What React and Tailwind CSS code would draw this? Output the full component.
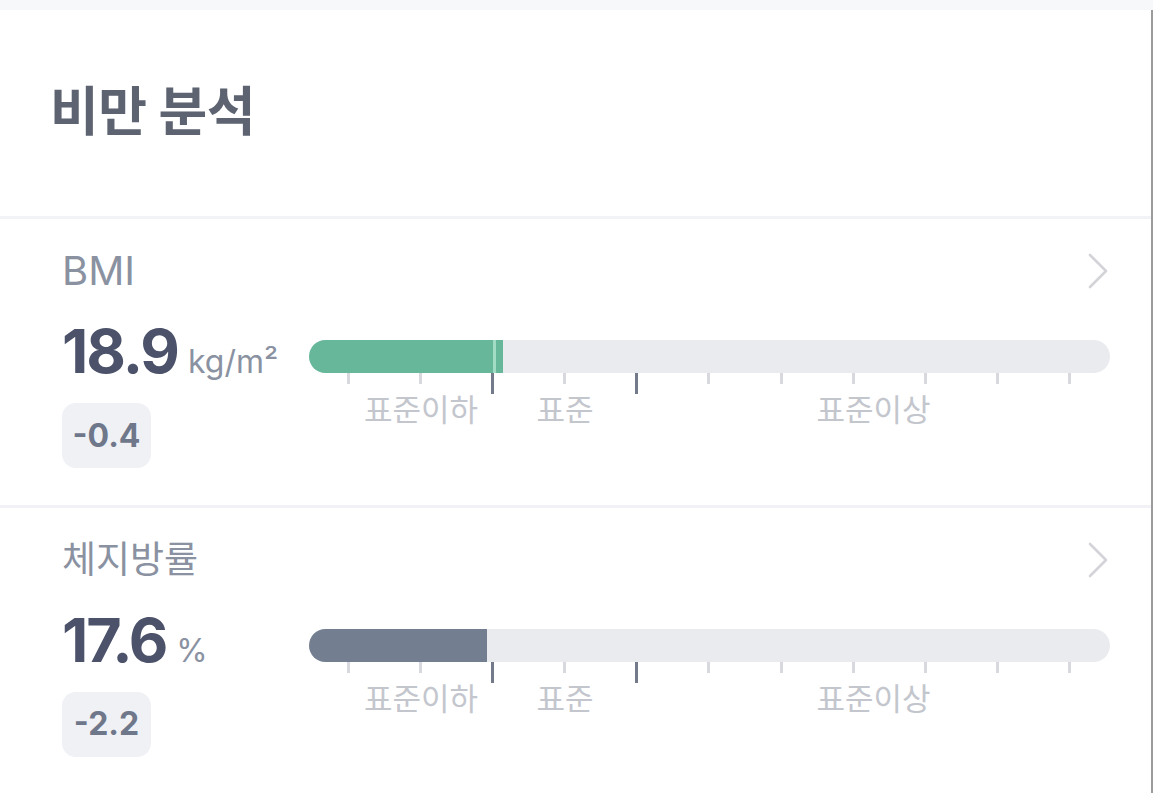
const sections = [
  { label: "BMI", labelSize: "text-[40px]", value: "18.9", unit: "kg/m²", diff: "-0.4", fill: 194, color: "bg-[#67b89b]", marker: true },
  { label: "체지방률", labelSize: "text-[37px]", value: "17.6", unit: "%", diff: "-2.2", fill: 178, color: "bg-[#737e90]", marker: false },
];

const ticks = [false, false, true, false, true, false, false, false, false, false, false];

const Chevron = () => (
  <svg width="22" height="36" viewBox="0 0 22 36" fill="none" className="mr-[1px]">
    <path d="M3 2 L19 18 L3 34" stroke="#d3d4d8" strokeWidth="2.6" strokeLinecap="round" strokeLinejoin="round" />
  </svg>
);

const Gauge = ({ fill, color, marker }) => (
  <div className="flex-1 pt-[20px]">
    <div className="relative h-[33px] rounded-full bg-[#eaebef] overflow-hidden">
      <div className={`relative h-full ${color}`} style={{ width: fill }}>
        {marker && <div className="absolute top-0 bottom-0 right-[7px] w-[3px] bg-[#a3dcc4]" />}
      </div>
    </div>
    <div className="flex justify-between items-start pl-[38px] pr-[39px] h-[21px]">
      {ticks.map((major, i) => (
        <div
          key={i}
          className={major ? "w-[3px] h-[21px] bg-[#737a89]" : "w-[3px] h-[11px] bg-[#d7d9de]"}
        />
      ))}
    </div>
    <div className="flex text-[31px] leading-[34px] text-[#c3c6cd] -mt-[1px]">
      <div className="w-[40px]" />
      <div className="w-[144px] text-center">표준이하</div>
      <div className="w-[144px] text-center">표준</div>
      <div className="flex-1 text-center">표준이상</div>
    </div>
  </div>
);

const Section = ({ data }) => (
  <section className="h-[286px] pl-[62px] pr-[41px] pt-[28px]">
    <div className="flex items-center justify-between h-[48px]">
      <span className={`${data.labelSize} leading-[48px] text-[#8a92a2]`}>{data.label}</span>
      <Chevron />
    </div>
    <div className="flex mt-[25px]">
      <div className="w-[247px] flex flex-col items-start">
        <div className="flex items-baseline gap-[10px]">
          <span className="text-[61px] leading-[62px] font-bold tracking-[-2px] text-[#4b5269]">
            {data.value}
          </span>
          <span className="text-[32px] leading-[32px] text-[#8a92a2]">{data.unit}</span>
        </div>
        <div className="mt-[21px] w-[89px] h-[65px] rounded-[14px] bg-[#f0f1f5] flex items-center justify-center">
          <span className="text-[32px] font-bold text-[#6f778a]">{data.diff}</span>
        </div>
      </div>
      <Gauge fill={data.fill} color={data.color} marker={data.marker} />
    </div>
  </section>
);

export default function App() {
  return (
    <div
      className="w-[1153px] h-[793px] overflow-hidden bg-white"
      style={{ fontFamily: 'Inter, "Noto Sans CJK KR", sans-serif' }}
    >
      <div className="h-[10px] bg-[#f7f8fa]" />
      <div className="flex h-[783px]">
        <div className="flex-1 flex flex-col">
          <div className="h-[207px] flex items-center pl-[50px]">
            <h1 className="text-[53px] font-bold text-[#5d6370] tracking-[-0.5px]">비만 분석</h1>
          </div>
          <div className="h-[3px] bg-[#f2f3f6]" />
          <Section data={sections[0]} />
          <div className="h-[3px] bg-[#f2f2f6]" />
          <Section data={sections[1]} />
        </div>
        <div className="w-[2px] bg-[#9b9b9b]" />
      </div>
    </div>
  );
}
